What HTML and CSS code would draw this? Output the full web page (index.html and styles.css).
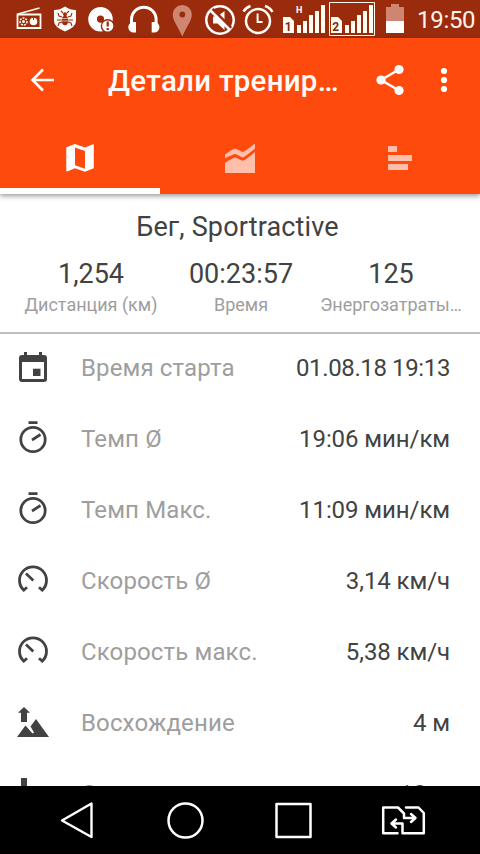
FILE: index.html
```html
<!DOCTYPE html>
<html lang="ru">
<head>
<meta charset="utf-8">
<title>Детали тренировки</title>
<link rel="stylesheet" href="styles.css">
</head>
<body>
<div class="screen">
  <div class="status">
    <svg width="38" height="38" viewBox="10 0 38 38"><path d="M17.500 14.500h23v13.500h-23z" fill="none" stroke="#fffdf0" stroke-width="1.800"/><path d="M18 14 39.500 8" stroke="#fffdf0" stroke-width="1.300"/><circle cx="23.500" cy="21.500" r="3.500" fill="none" stroke="#fffdf0" stroke-width="1.500" stroke-dasharray="2 1"/><circle cx="23.500" cy="21.500" r="1.500" fill="#fffdf0"/><circle cx="33.500" cy="21.500" r="3.800" fill="#fffdf0"/><path d="M33.500 17v3" stroke="#9b2b0d"/></svg>
    <svg width="34" height="38" viewBox="48 0 34 38"><path d="M65 6.500q5 3.500 11 3.500v11q0 6-11 10.500-11-4.500-11-10.500V10q6 0 11-3.500z" fill="#fffdf7"/><ellipse cx="65" cy="20.500" rx="3.400" ry="4.800" fill="#9b2b0d"/><circle cx="65" cy="14.300" r="2" fill="#9b2b0d"/><path d="M62 17l-3-1-1-3M68 17l3-1 1-3M61 20h-4M69 20h4M62 22l-3 1-1 3M68 22l3 1 1 3M63 13l-2-2M67 13l2-2" fill="none" stroke="#9b2b0d" stroke-width="1.100"/><path d="M62 18.500h6M62 21h6" stroke="#fffdf7" stroke-width=".6"/></svg>
    <svg width="38" height="38" viewBox="82 0 38 38"><path fill-rule="evenodd" d="M100.500 7a12 12 0 1 1 0 24.500 12 12 0 0 1 0-24.500zm0 8.500a3.600 3.600 0 1 0 0 7.200 3.600 3.600 0 0 0 0-7.200z" fill="#fff"/><circle cx="107.700" cy="26" r="7" fill="#9b2b0d"/><circle cx="107.700" cy="26" r="5.600" fill="#fff"/><path d="M107.700 21.500v5M107.700 28v2" stroke="#9b2b0d" stroke-width="2.200"/></svg>
    <svg width="46" height="38" viewBox="120 0 46 38"><path d="M131.500 24v-4.500a12.300 12.300 0 0 1 24.600 0V24" fill="none" stroke="#fff" stroke-width="3"/><path d="M136 22v10.500h-2.500a5 5 0 0 1 0-10.500zM151.700 22v10.500h2.500a5 5 0 0 0 0-10.500z" fill="#fff"/></svg>
    <svg width="33" height="38" viewBox="166 0 33 38"><path fill-rule="evenodd" d="M182.300 5a9.400 9.400 0 0 1 9.500 9.500c0 6-4 10-9.500 22-5.500-12-9.500-16-9.500-22a9.400 9.400 0 0 1 9.500-9.500zm0 6.600a2.900 2.900 0 1 0 0 5.800 2.900 2.900 0 0 0 0-5.800z" fill="#ce8671"/></svg>
    <svg width="40" height="38" viewBox="199 0 40 38"><circle cx="220" cy="20" r="13.700" fill="none" stroke="#fff" stroke-width="2.500"/><path d="M213 16.500h4.500l7-5.500v19l-7-6.500H213z" fill="#fff"/><path d="M212.500 9 231 28" stroke="#9b2b0d" stroke-width="3"/><path d="M210.500 10.500 229.500 29.500" stroke="#fff" stroke-width="2.500"/></svg>
    <svg width="39" height="38" viewBox="239 0 39 38"><g fill="none" stroke="#fffdf5"><circle cx="258" cy="21" r="12" stroke-width="2.500"/><path d="M257.600 13.500v8.500h5" stroke-width="2"/><path d="M243.500 11.500q2.500-4 7-5.500M265 6q5 1.500 7.500 6" stroke-width="2.500"/></g></svg>
    <svg width="50" height="38" viewBox="278 0 50 38"><path d="M283 33V17h7l4 4v12z" fill="#fffdf0"/><path d="M297 33h4v-8h-4zM303 33h4V21h-4zM309 33h4V15h-4zM315 33h4V11h-4zM321 33h4V5h-4z" fill="#fffdf0"/><text x="284.700" y="30.500" class="sim-digit">1</text><text x="296" y="13" class="net">H</text></svg>
    <svg width="52" height="38" viewBox="328 0 52 38"><path d="M329.500 2.500h45v33h-45z" fill="none" stroke="#fffdf0" stroke-width="1"/><path d="M331 33V17h7l4 4v12z" fill="#fffdf0"/><path d="M345 33h4v-8h-4zM351 33h4V21h-4zM357 33h4V15h-4zM363 33h4V11h-4zM369 33h4V5h-4z" fill="#fffdf0"/><text x="332.200" y="30.500" class="sim-digit">2</text></svg>
    <svg width="34" height="38" viewBox="380 0 34 38"><path d="M386 33V7h5V4h8v3h5v26z" fill="#ce8671"/><path d="M386 21h18v12h-18z" fill="#fff"/></svg>
    <span class="clock">19:50</span>
  </div>

  <header class="header">
    <div class="appbar">
      <svg class="back" width="32" height="32" viewBox="26 64 32 32"><path d="M43 69.500 32.500 80 43 90.500M32.500 80H54" fill="none" stroke="#fff" stroke-width="2.600"/></svg>
      <h1 class="title">Детали тренир…</h1>
      <svg class="share" width="34" height="34" viewBox="373 63 34 34"><path d="M399 69.500 381 80l18 10.500" fill="none" stroke="#fff" stroke-width="2.500"/><g fill="#fff"><circle cx="399" cy="69.500" r="4.600"/><circle cx="381" cy="80" r="4.600"/><circle cx="399" cy="90.500" r="4.600"/></g></svg>
      <svg class="more" width="10" height="34" viewBox="439 63 10 34"><g fill="#fff"><circle cx="444" cy="71" r="3.100"/><circle cx="444" cy="80" r="3.100"/><circle cx="444" cy="89" r="3.100"/></g></svg>
    </div>
    <nav class="tabs">
      <div class="tab tab-active"><svg width="36" height="36" viewBox="62 140 36 36"><path fill-rule="evenodd" d="M66.300 147.200 75 144l10 3.500 8-3.200q.8 0 .8.800v23.200L85 171.800l-10-3.500-8 3.200q-.7 0-.7-.8zM75 147.500v17.700l10 3.500V151z" fill="#fff"/></svg></div>
      <div class="tab"><svg width="36" height="36" viewBox="222 140 36 36"><path d="M225 173v-10q8-5.500 10.500-5.500l7 3.300q2 0 12.500-8.800V173zM225 158.500v-4q8-6 10.500-6l7 3.500q2 0 12.500-8.500v5q-10.500 9-12.500 9l-7-3.500q-2.500 0-10.500 4.500z" fill="#ffbfaa"/></svg></div>
      <div class="tab"><svg width="36" height="36" viewBox="382 140 36 36"><path d="M388 146h9v6h-9zM388 155h24v6h-24zM388 164h20v6h-20z" fill="#ffbfaa"/></svg></div>
    </nav>
  </header>

  <section class="summary">
    <h2 class="activity">Бег, Sportractive</h2>
    <div class="stats">
      <div class="stat"><div class="num">1,254</div><div class="cap">Дистанция (км)</div></div>
      <div class="stat"><div class="num">00:23:57</div><div class="cap">Время</div></div>
      <div class="stat"><div class="num">125</div><div class="cap">Энергозатраты…</div></div>
    </div>
  </section>

  <svg width="0" height="0" class="defs">
    <symbol id="watch" viewBox="15 421 36 36"><circle cx="33" cy="439.500" r="12.200" fill="none" stroke="#424242" stroke-width="2.800"/><path d="M28.500 422.700h9M32 440l8.500-5.500" stroke="#424242" stroke-width="2.700"/></symbol>
    <symbol id="gauge" viewBox="15 563 36 36"><path d="M27 587.300l-3.200 2.900A13.500 13.500 0 1 1 42.200 590.200l-3.200-2.900" fill="none" stroke="#424242" stroke-width="2.800"/><path d="M26 573.500l7.300 7" stroke="#424242" stroke-width="2.700"/></symbol>
  </svg>
  <main class="list">
    <div class="row"><svg class="icon" viewBox="15 350 36 36"><path fill-rule="evenodd" d="M24 352h3v3h12v-3h3v3h2q3 0 3 3v21q0 3-3 3H22q-3 0-3-3v-21q0-3 3-3h2zM22 362v17h22v-17z" fill="#424242"/><path d="M33 368.700h7.500v7.300H33z" fill="#424242"/></svg><span class="name">Время старта</span><span class="value value-date">01.08.18 19:13</span></div>
    <div class="row"><svg class="icon"><use href="#watch"/></svg><span class="name">Темп Ø</span><span class="value">19:06 мин/км</span></div>
    <div class="row"><svg class="icon"><use href="#watch"/></svg><span class="name">Темп Макс.</span><span class="value">11:09 мин/км</span></div>
    <div class="row"><svg class="icon"><use href="#gauge"/></svg><span class="name">Скорость Ø</span><span class="value">3,14 км/ч</span></div>
    <div class="row"><svg class="icon"><use href="#gauge"/></svg><span class="name">Скорость макс.</span><span class="value">5,38 км/ч</span></div>
    <div class="row"><svg class="icon" viewBox="15 705 36 36"><path d="M24 707l6 5.800h-3v9.200h-6v-9.200h-3zM17 737l8.500-11.500 7 8 1.500-1-3.500-6 5.500-7.500L49 737z" fill="#424242"/></svg><span class="name">Восхождение</span><span class="value">4 м</span></div>
    <div class="row"><svg class="icon" viewBox="15 776 36 36"><path d="M21 778h6v9h3l-6 6-6-6h3zM17 808l9-12 6.500 8.500L36 790l13 18z" fill="#424242"/></svg><span class="name">Спуск</span><span class="value">18 м</span></div>
  </main>

  <footer class="nav">
    <svg width="50" height="68" viewBox="52 786 50 68"><path d="M91.500 803.500v33.500L62 820.500z" fill="none" stroke="#fff" stroke-width="2.400" stroke-linejoin="round"/></svg>
    <svg width="50" height="68" viewBox="160 786 50 68"><circle cx="185.500" cy="820.500" r="17" fill="none" stroke="#fff" stroke-width="2.500"/></svg>
    <svg width="50" height="68" viewBox="269 786 50 68"><path d="M277.500 804h34v33h-34z" fill="none" stroke="#fff" stroke-width="2.500" stroke-linejoin="round"/></svg>
    <svg width="54" height="68" viewBox="376 786 54 68"><g fill="none" stroke="#fff" stroke-width="2.500" stroke-linecap="round" stroke-linejoin="round"><path d="M397.500 833.200H383.200V807.500H398l6 6V818h11M411 814l4.500 4-4.500 4"/><path d="M406 807.500h12.500l5.300 5.500v20.200H402.500V823.500H392M396 819.500l-4.500 4 4.500 4"/></g></svg>
  </footer>
</div>
</body>
</html>
```

FILE: styles.css
```css
* {
  box-sizing: border-box;
}

body {
  margin: 0;
  font-family: Roboto, "Noto Sans", sans-serif;
  color: #424242;
  background: #fff;
}

svg {
  display: block;
  flex: none;
}

.screen {
  width: 480px;
  height: 854px;
  display: flex;
  flex-direction: column;
  overflow: hidden;
}

.status {
  flex: none;
  height: 38px;
  padding-left: 10px;
  display: flex;
  background: #9b2b0d;
}

.clock {
  padding-left: 3px;
  font-size: 24px;
  line-height: 40px;
  letter-spacing: -0.3px;
  color: #fff5ee;
}

.sim-digit {
  font: bold 12px Roboto, sans-serif;
  fill: #7a2a12;
}

.net {
  font: bold 9px Roboto, sans-serif;
  fill: #fffdf0;
}

.header {
  flex: none;
  height: 156px;
  background: #ff4a0e;
  box-shadow: 0 2px 5px rgba(0, 0, 0, 0.4);
}

.appbar {
  height: 84px;
  padding-left: 26px;
  display: flex;
  align-items: center;
}

.title {
  width: 240px;
  margin: 2px 0 0 50px;
  font-size: 29.5px;
  font-weight: 500;
  line-height: 36px;
  letter-spacing: 0.25px;
  white-space: nowrap;
  color: #fffaf5;
}

.share {
  margin-left: 25px;
}

.more {
  margin-left: 32px;
}

.tabs {
  height: 72px;
  display: grid;
  grid-template-columns: repeat(3, 1fr);
}

.tab {
  display: flex;
  justify-content: center;
  align-items: center;
  padding-top: 6px;
  border-bottom: 6px solid transparent;
}

.tab-active {
  border-color: #fff;
}

.summary {
  flex: none;
  height: 140px;
  padding: 16px 14px 0 16px;
  border-bottom: 2px solid #bdbdbd;
  text-align: center;
}

.activity {
  margin: 0 7px 0 0;
  font-size: 27px;
  font-weight: 400;
  line-height: 34px;
  letter-spacing: 0.15px;
}

.stats {
  display: grid;
  grid-template-columns: repeat(3, 150px);
  margin-top: 13px;
}

.num {
  font-size: 27px;
  line-height: 34px;
}

.cap {
  font-size: 18px;
  line-height: 28px;
  white-space: nowrap;
  color: #9e9e9e;
}

.list {
  flex: 1;
  min-height: 0;
  overflow: hidden;
}

.row {
  height: 71px;
  padding: 0 30px 3px 15px;
  display: flex;
  align-items: center;
  font-size: 24px;
  white-space: nowrap;
}

.icon {
  width: 36px;
  height: 36px;
}

.name {
  margin-left: 30px;
  letter-spacing: 0.13px;
  color: #9e9e9e;
}

.value {
  margin-left: auto;
  letter-spacing: -0.08px;
}

.value-date {
  letter-spacing: -0.38px;
}

.defs {
  position: absolute;
}

.nav {
  flex: none;
  height: 68px;
  padding: 0 50px 0 52px;
  display: flex;
  justify-content: space-between;
  background: #000;
}
```
